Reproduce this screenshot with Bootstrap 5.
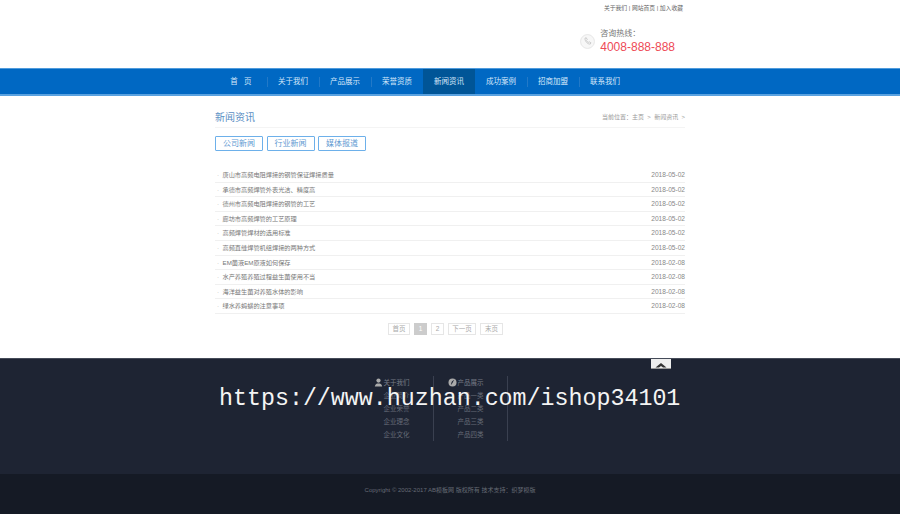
<!DOCTYPE html>
<html lang="zh">
<head>
<meta charset="utf-8">
<title>新闻资讯</title>
<link href="https://cdn.jsdelivr.net/npm/bootstrap@5.3.0/dist/css/bootstrap.min.css" rel="stylesheet">
<style>
html,body{height:514px;overflow:hidden}
body{font-family:"Liberation Sans","Noto Sans CJK SC",sans-serif;font-size:7px;color:#666;background:#fff;position:relative}
.wrap{width:470px;margin-left:215px}
.tophead{height:68px}
.toplinks{padding:4px 2px 0 0;line-height:9px;font-size:5.8px;color:#666}
.hot{margin:16px 10px 0 0;gap:5px}
.hot-ic{width:15px;height:15px;margin-top:5px}
.hot-lbl{font-size:8px;line-height:10px;color:#777}
.hot-num{font-size:12px;line-height:16px;color:#ee4a56}
.mainnav{height:28px;background:#0068c3;border-top:1px solid #4f9bdc;border-bottom:2px solid #5aa2e0}
.mi{height:25px;width:52px;color:#d5e7fa;font-size:7.5px;position:relative;line-height:25px;text-align:center}
.mi+.mi:before{content:"";position:absolute;left:0;top:8px;height:10px;border-left:1px solid #2279c8}
.mi.on{background:#005597}
.mi.on:before,.mi.on+.mi:before{display:none}
.pagehead{height:20px;margin-top:12px;border-bottom:1px solid #f4f4f4}
.ptitle{font-size:10px;color:#5b8fc4;line-height:17px;padding-top:1px}
.crumb{font-size:6px;color:#999;line-height:10px;padding-top:4px}
.tabs{gap:3.500px;margin-top:8px}
.tabb{width:48px;height:15px;border:1px solid #6db0ea;border-radius:1px;color:#5f9ad2;font-size:8px;line-height:13px;text-align:center}
.newslist{margin:17px 0 0;list-style:none;padding:0}
.newslist li{height:14.6px;border-bottom:1px solid #f0f0f0;font-size:6.2px;line-height:13px;color:#777;padding:0 0 0 2px}
.dotm{color:#aaa;width:5.500px;display:inline-block}
.dt{color:#888;font-size:6.600px}
.pager{gap:4px;margin-top:9px;margin-left:173px}
.pg{height:12px;border:1px solid #e6e6e6;font-size:6.5px;line-height:10px;text-align:center;color:#aaa}
.pg.on{background:#ccc;border-color:#ccc;color:#fff}
.foot1{position:absolute;left:0;right:0;top:358px;height:116px;background:#1e2433;border-top:1px solid #454b59}
.foot2{position:absolute;left:0;right:0;top:474px;height:40px;background:#151a25;text-align:center;color:#666b75;font-size:6px;line-height:33px}
.totop{position:absolute;left:651px;top:0;width:20px;height:10px;background:#eee;border-bottom:1px solid #999}
.fcols{position:absolute;left:360px;top:17px;height:57px}
.fcol{width:74px;height:65px;border-right:1px solid #3a4050;text-align:center;color:#666b77;font-size:6.5px;line-height:13px}
.fh{color:#767b86;height:13px;display:flex;justify-content:center;align-items:center;gap:1px}
.fh svg{margin-left:-10px}
.wm{position:absolute;left:219px;top:384px;font-family:"Liberation Mono",monospace;font-size:23.300px;line-height:30px;color:#f4f4f4;white-space:nowrap}
</style>
</head>
<body>
<header class="wrap tophead">
  <div class="d-flex justify-content-end toplinks">关于我们&nbsp;|&nbsp;网站首页&nbsp;|&nbsp;加入收藏</div>
  <div class="d-flex justify-content-end hot">
    <svg class="hot-ic" viewBox="0 0 16 16"><circle cx="8" cy="8" r="7.4" fill="#f7f7f7" stroke="#e4e4e4"/><path d="M5.3 4.5l1.4-.5 1 2-.9.9c.4.9 1 1.600 2 2.100l.9-.8 1.900 1.100-.6 1.400c-2.900.4-5.900-3-5.700-6.200z" fill="none" stroke="#c4c4c4" stroke-width=".9"/></svg>
    <div><div class="hot-lbl">咨询热线：</div><div class="hot-num">4008-888-888</div></div>
  </div>
</header>
<nav class="mainnav">
  <div class="wrap d-flex">
    <div class="mi">首&nbsp;&nbsp;&nbsp;页</div>
    <div class="mi">关于我们</div><div class="mi">产品展示</div><div class="mi">荣誉资质</div>
    <div class="mi on">新闻资讯</div><div class="mi">成功案例</div><div class="mi">招商加盟</div><div class="mi">联系我们</div>
  </div>
</nav>
<main class="wrap">
  <div class="d-flex justify-content-between pagehead">
    <div class="ptitle">新闻资讯</div>
    <div class="crumb">当前位置：主页&nbsp;&nbsp;&gt;&nbsp;&nbsp;新闻资讯&nbsp;&nbsp;&gt;</div>
  </div>
  <div class="d-flex tabs"><div class="tabb">公司新闻</div><div class="tabb">行业新闻</div><div class="tabb">媒体报道</div></div>
  <ul class="newslist">
    <li class="d-flex justify-content-between"><span><span class="dotm">·</span>唐山市高频电阻焊接的钢管保证焊接质量</span><span class="dt">2018-05-02</span></li>
    <li class="d-flex justify-content-between"><span><span class="dotm">·</span>承德市高频焊管外表光洁、精度高</span><span class="dt">2018-05-02</span></li>
    <li class="d-flex justify-content-between"><span><span class="dotm">·</span>德州市高频电阻焊接的钢管的工艺</span><span class="dt">2018-05-02</span></li>
    <li class="d-flex justify-content-between"><span><span class="dotm">·</span>廊坊市高频焊管的工艺原理</span><span class="dt">2018-05-02</span></li>
    <li class="d-flex justify-content-between"><span><span class="dotm">·</span>高频焊管焊材的选用标准</span><span class="dt">2018-05-02</span></li>
    <li class="d-flex justify-content-between"><span><span class="dotm">·</span>高频直缝焊管机组焊接的两种方式</span><span class="dt">2018-05-02</span></li>
    <li class="d-flex justify-content-between"><span><span class="dotm">·</span>EM菌液EM原液如何保存</span><span class="dt">2018-02-08</span></li>
    <li class="d-flex justify-content-between"><span><span class="dotm">·</span>水产养殖养殖过程益生菌使用不当</span><span class="dt">2018-02-08</span></li>
    <li class="d-flex justify-content-between"><span><span class="dotm">·</span>海洋益生菌对养殖水体的影响</span><span class="dt">2018-02-08</span></li>
    <li class="d-flex justify-content-between"><span><span class="dotm">·</span>绿水养蚂蟥的注意事项</span><span class="dt">2018-02-08</span></li>
  </ul>
  <div class="d-flex pager">
    <div class="pg" style="width:22px">首页</div><div class="pg on" style="width:13px">1</div><div class="pg" style="width:13px">2</div><div class="pg" style="width:28px">下一页</div><div class="pg" style="width:23px">末页</div>
  </div>
</main>
<footer>
  <div class="foot1">
    <div class="totop"><svg width="20" height="10" viewBox="0 0 20 10"><path d="M4.500 8.500l5.500-4.500 5.500 4.500h-3.500l-2-1.600-2 1.600z" fill="#333"/></svg></div>
    <div class="fcols d-flex">
      <div class="fcol">
        <div class="fh"><svg width="9" height="9" viewBox="0 0 9 9"><circle cx="4.500" cy="2.600" r="2.100" fill="#aaa"/><path d="M.8 8.600c.4-2.500 2-3 3.700-3s3.300.5 3.700 3z" fill="#aaa"/></svg>关于我们</div>
        <div>企业简介</div><div>企业荣誉</div><div>企业理念</div><div>企业文化</div>
      </div>
      <div class="fcol">
        <div class="fh"><svg width="9" height="9" viewBox="0 0 9 9"><circle cx="4.500" cy="4.500" r="4" fill="#aaa"/><path d="M6.500 1.500C5 3 5 5 2.500 7.500 4 6 2 4 6.500 1.500z" fill="#1e2433"/></svg>产品展示</div>
        <div>产品一类</div><div>产品二类</div><div>产品三类</div><div>产品四类</div>
      </div>
    </div>
  </div>
  <div class="foot2">Copyright © 2002-2017 AB模板网 版权所有 技术支持：织梦模版</div>
</footer>
<div class="wm">https://www.huzhan.com/ishop34101</div>
</body>
</html>
